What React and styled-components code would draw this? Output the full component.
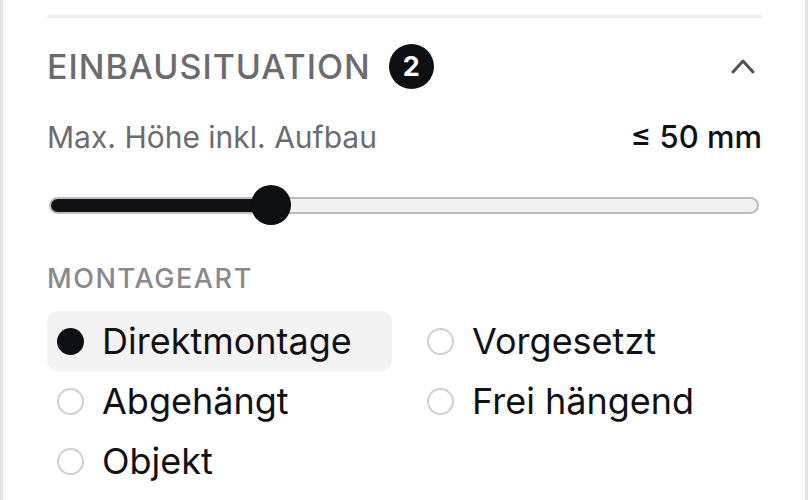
import React from "react";
import styled, { createGlobalStyle } from "styled-components";

const Global = createGlobalStyle`
  html, body { margin: 0; padding: 0; background: #ffffff; }
  body { font-family: Inter, "Noto Sans", sans-serif; -webkit-font-smoothing: antialiased; }
`;

const Panel = styled.div`
  box-sizing: border-box;
  width: 808px;
  height: 500px;
  border-left: 3px solid #e4e4e9;
  border-right: 3px solid #e4e4e9;
  padding: 15px 43px 0 44px;
  overflow: hidden;
`;

const Divider = styled.div`
  height: 3px;
  background: #efeff1;
  border-radius: 2px;
`;

const Header = styled.div`
  display: flex;
  align-items: center;
  justify-content: space-between;
  height: 62px;
  margin-top: 17px;
`;

const TitleWrap = styled.div`
  display: flex;
  align-items: center;
  gap: 18px;
`;

const Title = styled.h2`
  margin: 0;
  font-size: 34px;
  font-weight: 500;
  letter-spacing: 1px;
  color: #6b6b70;
`;

const Badge = styled.span`
  display: inline-flex;
  align-items: center;
  justify-content: center;
  width: 45px;
  height: 45px;
  border-radius: 50%;
  background: #0e0f12;
  color: #fff;
  font-size: 27px;
  font-weight: 700;
`;

const Chevron = styled.svg`
  width: 26px;
  height: 18px;
  margin-right: 6px;
  color: #505055;
`;

const LabelRow = styled.div`
  display: flex;
  justify-content: space-between;
  align-items: baseline;
  margin-top: 21px;
`;

const Label = styled.span`
  font-size: 30px;
  color: #6b6b70;
`;

const Value = styled.span`
  font-size: 31px;
  font-weight: 500;
  color: #111114;
`;

const SliderWrap = styled.div`
  position: relative;
  height: 42px;
  margin-top: 29px;
  display: flex;
  align-items: center;
  padding: 0 3px 0 2px;
`;

const Track = styled.div`
  position: relative;
  flex: 1;
  height: 17px;
  box-sizing: border-box;
  border-radius: 9px;
  background: #f0f0f1;
  border: 2px solid #bdbdc0;
  overflow: hidden;
`;

const Fill = styled.div`
  position: absolute;
  left: -2px;
  top: -2px;
  bottom: -2px;
  background: #111216;
  border: 2px solid #3a3a3e;
  border-radius: 9px;
  box-sizing: border-box;
`;

const Thumb = styled.div`
  position: absolute;
  top: 1px;
  width: 40px;
  height: 40px;
  border-radius: 50%;
  background: #0e0f12;
  transform: translateX(-50%);
`;

const SubTitle = styled.div`
  margin-top: 36px;
  font-size: 27px;
  font-weight: 500;
  letter-spacing: 1.6px;
  color: #88888d;
`;

const Options = styled.div`
  display: grid;
  grid-template-columns: 345px 345px;
  column-gap: 25px;
  margin-top: 16px;
`;

const Option = styled.label`
  display: flex;
  align-items: center;
  gap: 18px;
  height: 60px;
  padding-left: 10px;
  border-radius: 11px;
  background: ${(p) => (p.$active ? "#f3f3f4" : "transparent")};
  font-size: 36px;
  color: #111114;
`;

const Radio = styled.span`
  box-sizing: border-box;
  width: 27px;
  height: 27px;
  border-radius: 50%;
  flex: none;
  background: ${(p) => (p.$checked ? "#0e0f12" : "#ffffff")};
  border: ${(p) => (p.$checked ? "none" : "2px solid #cfcfd2")};
`;

const options = [
  { label: "Direktmontage", checked: true },
  { label: "Vorgesetzt" },
  { label: "Abgehängt" },
  { label: "Frei hängend" },
  { label: "Objekt" },
];

export default function App() {
  const pct = 31;
  return (
    <>
      <Global />
      <Panel>
        <Divider />
        <Header>
          <TitleWrap>
            <Title>EINBAUSITUATION</Title>
            <Badge>2</Badge>
          </TitleWrap>
          <Chevron viewBox="0 0 26 18" fill="none">
            <polyline
              points="3,15 13,4 23,15"
              stroke="currentColor"
              strokeWidth="3"
              strokeLinecap="round"
              strokeLinejoin="round"
            />
          </Chevron>
        </Header>
        <LabelRow>
          <Label>Max. Höhe inkl. Aufbau</Label>
          <Value>≤ 50 mm</Value>
        </LabelRow>
        <SliderWrap>
          <Track>
            <Fill style={{ width: `calc(${pct}% + 4px)` }} />
          </Track>
          <Thumb style={{ left: `calc(${pct}% + 2px)` }} />
        </SliderWrap>
        <SubTitle>MONTAGEART</SubTitle>
        <Options>
          {options.map((o) => (
            <Option key={o.label} $active={o.checked}>
              <Radio $checked={o.checked} />
              {o.label}
            </Option>
          ))}
        </Options>
      </Panel>
    </>
  );
}
